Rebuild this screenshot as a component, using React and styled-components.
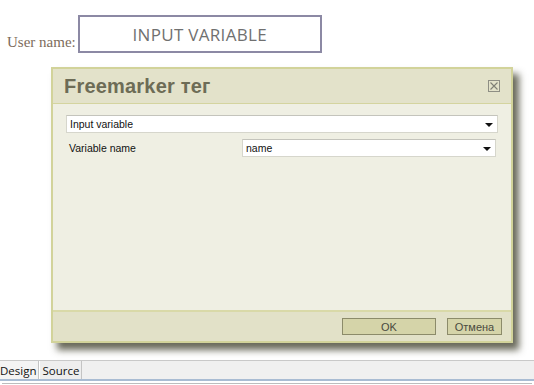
import styled, { createGlobalStyle } from "styled-components";

const Global = createGlobalStyle`
  html, body {
    margin: 0;
    padding: 0;
    background: #ffffff;
  }
`;

const Page = styled.div`
  position: relative;
  width: 534px;
  height: 385px;
  overflow: hidden;
  display: flex;
  flex-direction: column;
`;

const FormRow = styled.div`
  display: flex;
  align-items: flex-end;
  padding: 14px 0 0 7px;
  height: 38px;
`;

const FieldLabel = styled.span`
  font-family: "Liberation Serif", serif;
  font-size: 15px;
  color: #7d6c5c;
  line-height: 15px;
  margin-right: 2px;
  margin-bottom: 2px;
`;

const VarBox = styled.div`
  width: 240px;
  height: 34px;
  border: 2px solid #8c89a4;
  display: flex;
  align-items: center;
  justify-content: center;
  font-family: "Open Sans", sans-serif;
  font-size: 17px;
  letter-spacing: 0.3px;
  color: #707070;
  box-sizing: content-box;
  margin-bottom: -1px;
`;

const Spacer = styled.div`
  flex: 1;
`;

const Dialog = styled.div`
  position: absolute;
  left: 51px;
  top: 67px;
  width: 458px;
  height: 272px;
  border: 2px solid #d2d39a;
  background: #efefe3;
  display: flex;
  flex-direction: column;
  box-shadow: 6px 7px 7px rgba(55, 55, 35, 0.75);
  font-family: "Liberation Sans", Arial, sans-serif;
`;

const TitleBar = styled.div`
  height: 34px;
  background: #e3e2ca;
  border-bottom: 1px solid #d4d49f;
  display: flex;
  align-items: center;
  justify-content: space-between;
  padding: 0 11px 0 11px;
`;

const Title = styled.div`
  font-size: 20px;
  font-weight: bold;
  color: #6d6c56;
  letter-spacing: 0.2px;
`;

const CloseBox = styled.div`
  width: 10px;
  height: 10px;
  border: 1px solid #8e8e84;
  display: flex;
  align-items: center;
  justify-content: center;
  margin-top: -1px;
`;

const Body = styled.div`
  flex: 1;
  padding: 11px 13px 0 13px;
  display: flex;
  flex-direction: column;
  gap: 6px;
`;

const Select = styled.div`
  height: 16px;
  width: ${(p) => p.width || "auto"};
  background: #ffffff;
  border: 1px solid #d6d6cc;
  border-top-color: #c4c4bc;
  display: flex;
  align-items: center;
  justify-content: space-between;
  padding: 0 4px 0 3px;
  font-size: 10.5px;
  color: #111;
`;

const Arrow = styled.span`
  width: 0;
  height: 0;
  border-left: 4px solid transparent;
  border-right: 4px solid transparent;
  border-top: 4px solid #111;
  margin-top: 1px;
`;

const Row = styled.div`
  display: flex;
  align-items: center;
  justify-content: space-between;
  padding-left: 3px;
  padding-right: 2px;
`;

const Label = styled.span`
  font-size: 10.5px;
  color: #111;
`;

const Footer = styled.div`
  height: 29px;
  background: #e2e1c8;
  border-top: 2px solid #d9d9a8;
  display: flex;
  align-items: center;
  justify-content: flex-end;
  gap: 11px;
  padding-right: 9px;
`;

const Button = styled.div`
  width: ${(p) => p.width};
  height: 15px;
  background: #d5d4a9;
  border: 1px solid #8c8b6a;
  display: flex;
  align-items: center;
  justify-content: center;
  font-size: 11px;
  color: #4a4a40;
`;

const TabBar = styled.div`
  height: 18px;
  border-top: 1px solid #c9c9c9;
  border-bottom: 2px solid #a9bcd3;
  background: #f0f0f0;
  display: flex;
  margin-bottom: 4px;
  box-shadow: 0 4px 0 -2px #ffffff, 0 5px 0 -2px #bdbdbd;
`;

const Tab = styled.div`
  display: flex;
  align-items: center;
  padding: 0 2px;
  margin-left: ${(p) => (p.active ? "-2px" : "0")};
  font-family: "Open Sans", sans-serif;
  font-size: 11.5px;
  color: #111;
  background: ${(p) => (p.active ? "#f4f4f4" : "#eeeeee")};
  border-right: 1px solid #c4c4c4;
  border-left: ${(p) => (p.active ? "none" : "1px solid #ffffff")};
`;

export default function App() {
  return (
    <Page>
      <Global />
      <FormRow>
        <FieldLabel>User name:</FieldLabel>
        <VarBox>INPUT VARIABLE</VarBox>
      </FormRow>
      <Spacer />
      <TabBar>
        <Tab active>Design</Tab>
        <Tab>Source</Tab>
      </TabBar>
      <Dialog>
        <TitleBar>
          <Title>Freemarker тег</Title>
          <CloseBox>
            <svg width="8" height="8" viewBox="0 0 8 8">
              <path d="M0.5 0.5 L7.5 7.5 M7.5 0.5 L0.5 7.5" stroke="#7f7f76" strokeWidth="1.1" />
            </svg>
          </CloseBox>
        </TitleBar>
        <Body>
          <Select>
            <span>Input variable</span>
            <Arrow />
          </Select>
          <Row>
            <Label>Variable name</Label>
            <Select width="245px">
              <span>name</span>
              <Arrow />
            </Select>
          </Row>
        </Body>
        <Footer>
          <Button width="92px">OK</Button>
          <Button width="53px">Отмена</Button>
        </Footer>
      </Dialog>
    </Page>
  );
}
